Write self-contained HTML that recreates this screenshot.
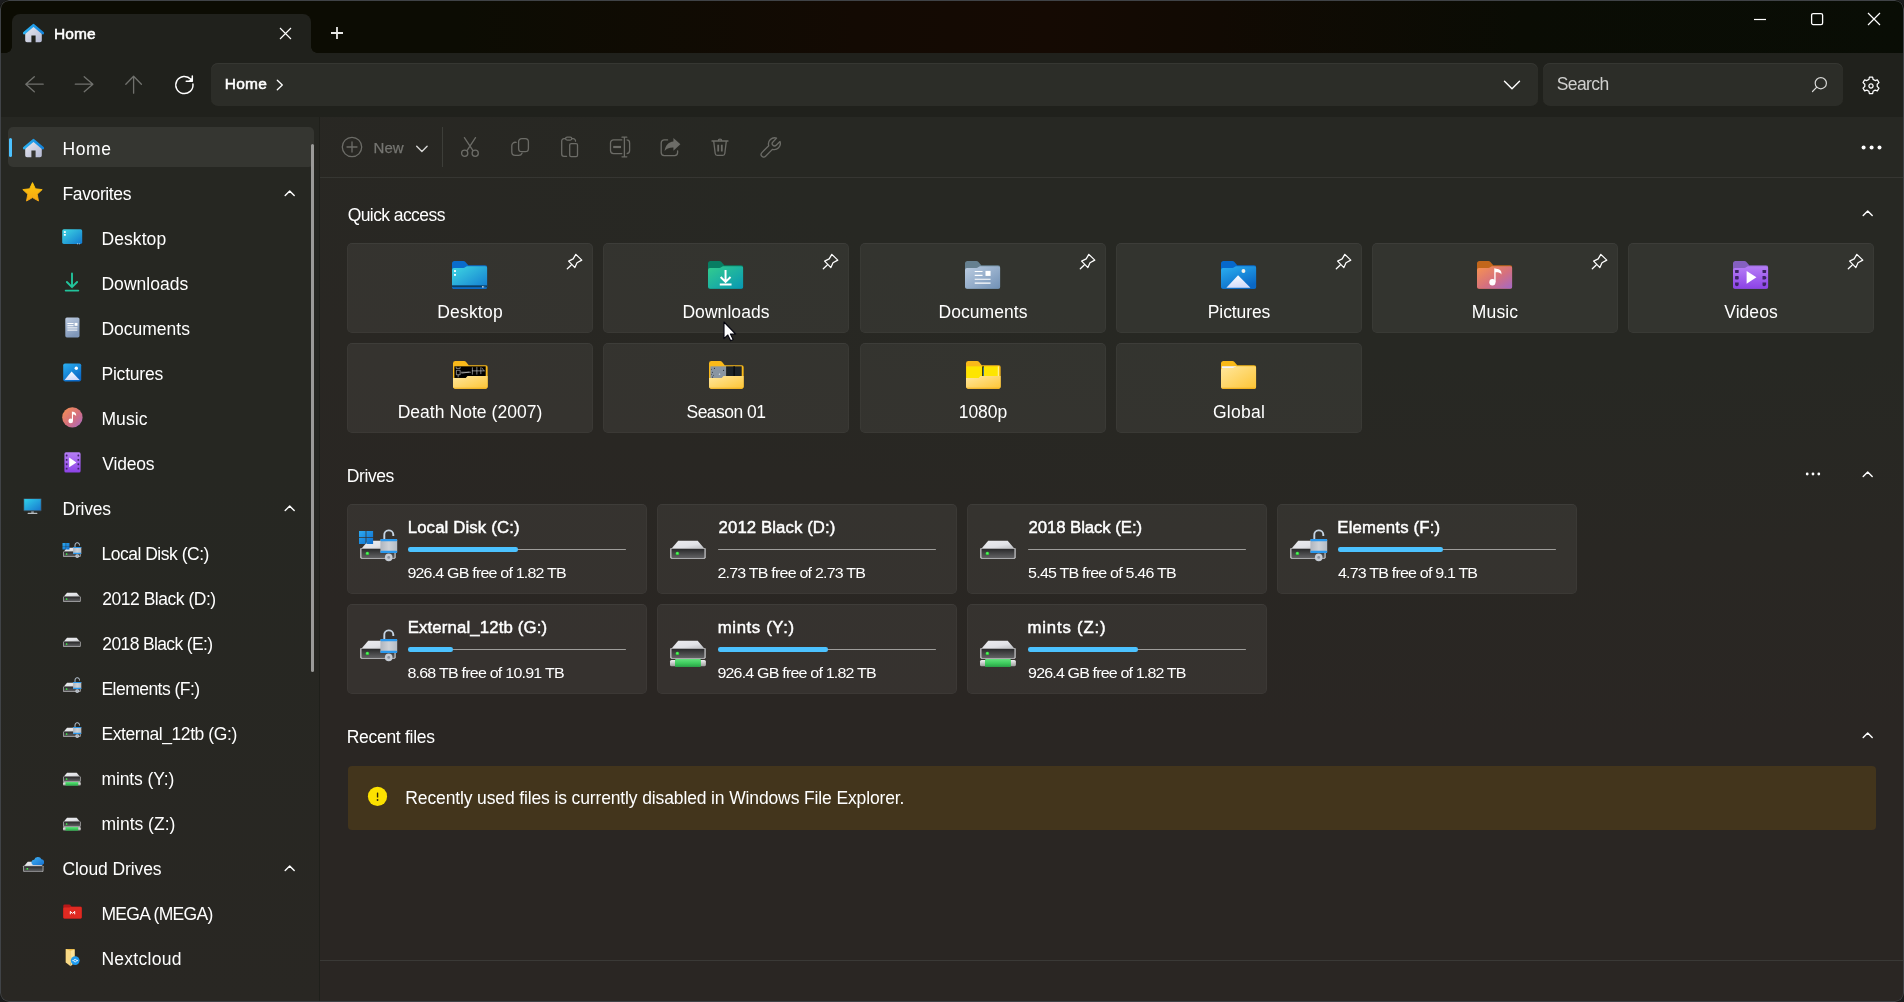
<!DOCTYPE html>
<html lang="en">
<head>
<meta charset="utf-8">
<title>Home - Files</title>
<style>
*{box-sizing:border-box;margin:0;padding:0}
html,body{width:1904px;height:1002px;overflow:hidden;background:#1b1c1d}
body{font-family:"Liberation Sans",sans-serif;color:#fff;position:relative}
#root{position:absolute;left:0;top:0;width:1904px;height:1002px;will-change:transform;border-radius:9px;overflow:hidden;background:#0b0c03}
#frame{position:absolute;left:0;top:0;width:1904px;height:1002px;border:1px solid #404347;border-radius:9px;pointer-events:none}
.abs,svg{position:absolute}
#titlebar{position:absolute;left:0;top:0;width:1904px;height:53px;background:linear-gradient(90deg,#0c0c03 0,#0c0c03 24%,#130a03 45%,#150a03 55%,#110a03 64%,#0a0c04 80%,#090d05 100%)}
#tab{position:absolute;left:12px;top:14px;width:299px;height:39px;background:#20211c;border-radius:8px 8px 0 0}
#tab:before,#tab:after{content:"";position:absolute;bottom:0;width:6px;height:6px}
#tab:before{left:-6px;background:radial-gradient(circle at 0 0,transparent 5.5px,#20211c 6px)}
#tab:after{right:-6px;background:radial-gradient(circle at 100% 0,transparent 5.5px,#20211c 6px)}
#navbar{position:absolute;left:0;top:53px;width:1904px;height:64px;background:#20211c}
.box{position:absolute;top:10px;height:43px;background:#2c2d28;border-radius:7px;box-shadow:inset 0 1px 0 #363732}
#sidebar{position:absolute;left:0;top:117px;width:319px;height:885px;background:linear-gradient(180deg,#262722 0,#262722 40%,#292723 100%)}
#divider{position:absolute;left:319px;top:117px;width:1px;height:885px;background:#1f201b}
#main{position:absolute;left:320px;top:117px;width:1584px;height:885px;background:radial-gradient(ellipse 130% 70% at 80% 0%,#272823 0,#272823 40%,#292723 70%,#2a2623 100%)}
.t{position:absolute;white-space:nowrap;line-height:1}
.sb{font-size:17.5px;color:#fff}
.card{position:absolute;background:rgba(255,255,255,.058);border-radius:5px;box-shadow:inset 0 0 0 1px rgba(255,255,255,.03),inset 0 1px 0 rgba(255,255,255,.02)}
.qa{width:246px;height:90px}
.qa .t{left:0;width:246px;text-align:center;font-size:17.5px}
.dr{width:300px;height:90px}
.dr .n{font-size:16.8px;-webkit-text-stroke:.45px #fff}
.semi{-webkit-text-stroke:.5px #fff}
.dr .s{font-size:16px;transform:scaleY(.9);transform-origin:0 0}
.dr .bar{position:absolute;left:61.2px;top:45px;width:217.6px;height:1.2px;background:#9e9d9b;border-radius:1px}
.dr .fill{position:absolute;left:61px;top:43.2px;height:4.4px;background:#4cc2ff;border-radius:2.2px}
.sec{font-size:17.5px;color:#fff}
</style>
</head>
<body>
<div id="root">
<div id="titlebar"></div>
<div id="tab"></div>
<div id="navbar">
  <div class="box" style="left:211px;width:1327px"></div>
  <div class="box" style="left:1543px;width:300px"></div>
</div>
<div id="sidebar"></div>
<div id="divider"></div>
<div id="main"></div>
<svg width="0" height="0" style="position:absolute">
<defs>
<linearGradient id="hg" x1="0" y1="0" x2="1" y2="1"><stop offset="0" stop-color="#e9eaf0"/><stop offset="1" stop-color="#b4b9d3"/></linearGradient>
<linearGradient id="hr" x1="0" y1="0" x2="1" y2="0"><stop offset="0" stop-color="#2cb2f3"/><stop offset="1" stop-color="#1384dc"/></linearGradient>
<linearGradient id="gStar" x1="0" y1="0" x2="0" y2="1"><stop offset="0" stop-color="#fdc70c"/><stop offset="1" stop-color="#f5a613"/></linearGradient>
<linearGradient id="gDesk" x1="0" y1="0" x2="1" y2="1"><stop offset="0" stop-color="#3fd8e2"/><stop offset="1" stop-color="#1279d0"/></linearGradient>
<linearGradient id="gDown" x1="0" y1="0" x2="1" y2="1"><stop offset="0" stop-color="#33cd8d"/><stop offset="1" stop-color="#0797b4"/></linearGradient>
<linearGradient id="gDoc" x1="0" y1="0" x2="1" y2="1"><stop offset="0" stop-color="#bccde1"/><stop offset="1" stop-color="#7090b5"/></linearGradient>
<linearGradient id="gPic" x1="0" y1="0" x2="0.6" y2="1"><stop offset="0" stop-color="#2bb0f1"/><stop offset="1" stop-color="#0a68c6"/></linearGradient>
<linearGradient id="gMnt" x1="0" y1="0" x2="0.3" y2="1"><stop offset="0" stop-color="#ffffff"/><stop offset="1" stop-color="#d3ddfb"/></linearGradient>
<linearGradient id="gMus" x1="0" y1="0" x2="1" y2="1"><stop offset="0" stop-color="#f8934f"/><stop offset="0.55" stop-color="#d5707e"/><stop offset="1" stop-color="#a268c8"/></linearGradient>
<linearGradient id="gVid" x1="0" y1="0" x2="0" y2="1"><stop offset="0" stop-color="#b67ef6"/><stop offset="1" stop-color="#8c42e6"/></linearGradient>
<linearGradient id="gFol" x1="0" y1="0" x2="1" y2="1"><stop offset="0" stop-color="#ffe79d"/><stop offset="1" stop-color="#fdc535"/></linearGradient>
<linearGradient id="gMon" x1="0" y1="0" x2="1" y2="1"><stop offset="0" stop-color="#2fd0ea"/><stop offset="1" stop-color="#1878cf"/></linearGradient>
<linearGradient id="gTop" x1="0" y1="0" x2="1" y2="1"><stop offset="0" stop-color="#ececef"/><stop offset="0.6" stop-color="#e2e3e7"/><stop offset="1" stop-color="#bfc0c4"/></linearGradient>
<linearGradient id="gFront" x1="0" y1="0" x2="0" y2="1"><stop offset="0" stop-color="#2a2a2b"/><stop offset="1" stop-color="#626264"/></linearGradient>
<linearGradient id="gGreen" x1="0" y1="0" x2="0" y2="1"><stop offset="0" stop-color="#62e07c"/><stop offset="0.5" stop-color="#3fcd5e"/><stop offset="1" stop-color="#2a9f47"/></linearGradient>
<linearGradient id="gPipe" x1="0" y1="0" x2="0" y2="1"><stop offset="0" stop-color="#f2f2f2"/><stop offset="1" stop-color="#9d9d9d"/></linearGradient>
<linearGradient id="gWin" x1="0" y1="0" x2="1" y2="1"><stop offset="0" stop-color="#2cabf2"/><stop offset="1" stop-color="#0d6bcb"/></linearGradient>
<linearGradient id="gLock" x1="0" y1="0" x2="1" y2="0"><stop offset="0" stop-color="#aeb5be"/><stop offset="0.5" stop-color="#ccd1d7"/><stop offset="1" stop-color="#b4bbc4"/></linearGradient>
<linearGradient id="gCloud" x1="0" y1="0" x2="1" y2="1"><stop offset="0" stop-color="#41b4f5"/><stop offset="1" stop-color="#1670d0"/></linearGradient>

<symbol id="iHome" viewBox="0 0 21 20"><path d="M2.2 9.2 L10.5 2.4 L18.8 9.2 V17.4 a1.8 1.8 0 0 1 -1.8 1.8 H12.6 V12.6 H8.4 V19.2 H4 a1.8 1.8 0 0 1 -1.8 -1.8Z" fill="url(#hg)"/><path d="M1.3 10.1 L10.5 2.2 L19.7 10.1" fill="none" stroke="url(#hr)" stroke-width="2.6" stroke-linecap="round" stroke-linejoin="round"/></symbol>

<symbol id="iStar" viewBox="0 0 21 20"><path d="M10.5 0.6 L13.4 6.8 L20.2 7.6 L15.2 12.2 L16.5 19 L10.5 15.6 L4.5 19 L5.8 12.2 L0.8 7.6 L7.6 6.8Z" fill="url(#gStar)" stroke="url(#gStar)" stroke-width="0.9" stroke-linejoin="round"/></symbol>

<!-- base folder pieces 36x29 -->
<symbol id="fBack" viewBox="0 0 36 29"><path d="M0 2.6 a2.6 2.6 0 0 1 2.6 -2.6 H11.6 a2.6 2.6 0 0 1 1.9 .8 L16.6 4.3 H33.6 a2.4 2.4 0 0 1 2.4 2.4 V26.3 a2.4 2.4 0 0 1 -2.4 2.4 H2.4 a2.4 2.4 0 0 1 -2.4 -2.4Z"/></symbol>
<symbol id="fFront" viewBox="0 0 36 29"><path d="M0 9.2 a2 2 0 0 1 2 -2 H11.6 a2.6 2.6 0 0 0 1.8 -.7 L15.2 5.4 H33.8 a2.2 2.2 0 0 1 2.2 2.2 V26.5 a2.2 2.2 0 0 1 -2.2 2.2 H2.2 a2.2 2.2 0 0 1 -2.2 -2.2Z"/></symbol>

<symbol id="iFDesk" viewBox="0 0 36 29"><use href="#fBack" fill="#0a6ccb"/><use href="#fFront" fill="url(#gDesk)"/><path d="M0 25.2 H36 V26.6 a2.2 2.2 0 0 1 -2.2 2.2 H2.2 a2.2 2.2 0 0 1 -2.2 -2.2Z" fill="#0e6ac4"/><rect x="0" y="25.2" width="36" height="1.8" fill="#0b3f63"/><rect x="2.1" y="9.4" width="1.9" height="1.9" fill="#fff"/><rect x="2.1" y="13.4" width="1.9" height="1.9" fill="#fff"/><rect x="30.8" y="26" width="1.4" height="1.4" fill="#fff"/><rect x="33" y="26.2" width="1" height="1" fill="#4a86b8"/></symbol>

<symbol id="iFDown" viewBox="0 0 36 29"><use href="#fBack" fill="#077d62"/><use href="#fFront" fill="url(#gDown)"/><path d="M17.9 9.3 V21.4 M12.9 16.5 L17.9 21.6 L23 16.5 M12 24.3 H24" stroke="#fff" stroke-width="2" fill="none" stroke-linejoin="miter"/></symbol>

<symbol id="iFDoc" viewBox="0 0 36 29"><use href="#fBack" fill="#668090"/><use href="#fFront" fill="url(#gDoc)"/><path d="M9.9 10.8 H17.9 M9.9 14.8 H17.9 M9.9 18.8 H26.1 M9.9 22.8 H26.1" stroke="#fff" stroke-width="1.15"/><rect x="20.9" y="10.2" width="5.2" height="5.2" fill="#fff"/></symbol>

<symbol id="iFPic" viewBox="0 0 36 29"><use href="#fBack" fill="#0668cb"/><use href="#fFront" fill="url(#gPic)"/><path d="M17.4 14.6 L30 27.6 H5.5Z" fill="url(#gMnt)"/><circle cx="22.9" cy="10.3" r="2" fill="#f4f2ea"/></symbol>

<symbol id="iFMus" viewBox="0 0 36 29"><use href="#fBack" fill="#c2661b"/><use href="#fFront" fill="url(#gMus)"/><ellipse cx="15.7" cy="22" rx="3.1" ry="3.3" fill="#fff"/><path d="M17.6 22 V7.6 C20 8.2 24.6 8.6 24.9 12 V14 C23.5 11.8 21.5 11.6 19 11.7 V22Z" fill="#fff"/></symbol>

<symbol id="iFVid" viewBox="0 0 36 29"><use href="#fBack" fill="#8560c0"/><use href="#fFront" fill="url(#gVid)"/><path d="M13.9 10.2 L23.9 16.8 L13.9 23.5Z" fill="#fff"/><g fill="#3c2365"><rect x="2.1" y="9.3" width="3.7" height="3" rx=".5"/><rect x="2.1" y="15.5" width="3.7" height="3.5" rx=".8"/><path d="M2.1 22.3 H5.8 V24.3 a1.8 1.8 0 0 1 -3.7 0Z"/><rect x="30.1" y="9.3" width="3.7" height="3" rx=".5"/><path d="M30.1 15.5 H32.3 a1.7 1.7 0 0 1 0 3.5 H30.1Z"/><path d="M30.1 22.3 H33.8 V24 a2 2 0 0 1 -3.7 1Z"/></g></symbol>

<!-- yellow folder, 35x29 -->
<symbol id="yBack" viewBox="0 0 35 29"><path d="M0 2.4 a2.4 2.4 0 0 1 2.4 -2.4 H11.2 a2.4 2.4 0 0 1 1.8 .8 L15.8 4.3 H32.8 a2.2 2.2 0 0 1 2.2 2.2 V26.4 a2.2 2.2 0 0 1 -2.2 2.2 H2.2 a2.2 2.2 0 0 1 -2.2 -2.2Z" fill="#f9b91a"/></symbol>
<symbol id="yFront" viewBox="0 0 35 29"><path d="M0 17.5 H12.8 L14.6 15.6 H35 V26.4 a2.2 2.2 0 0 1 -2.2 2.2 H2.2 a2.2 2.2 0 0 1 -2.2 -2.2Z" fill="url(#gFol)"/><path d="M0.6 27.6 a2.2 2.2 0 0 0 1.6 .9 H32.8 a2.2 2.2 0 0 0 1.6 -.9Z" fill="#f2ad16"/></symbol>

<symbol id="iFGlobal" viewBox="0 0 36 29"><use href="#fBack" fill="#f9b917"/><rect x="0.8" y="5.4" width="14.5" height="2" fill="#f1f3fb"/><use href="#fFront" fill="url(#gFol)"/><path d="M0.6 27.7 a2.2 2.2 0 0 0 1.6 .9 H33.8 a2.2 2.2 0 0 0 1.6 -.9Z" fill="#f2ad16"/></symbol>

<!-- drives 40x40 -->
<symbol id="dBase" viewBox="0 0 40 40"><path d="M10.2 11.7 H29.7 L36.1 19.2 H3.8Z" fill="url(#gTop)"/><path d="M2 20 a1 1 0 0 1 1 -1 H36.9 a1 1 0 0 1 1 1 V28.2 L36.8 30.1 H3.1 L2 28.2Z" fill="#a9a9ab"/><path d="M3.6 19.9 H36.3 V28 L35.6 29 H4.3 L3.6 28Z" fill="url(#gFront)"/><circle cx="9.4" cy="24.4" r="1.7" fill="#2ee33a"/><circle cx="9.1" cy="24.1" r=".7" fill="#8dff8f"/></symbol>
<symbol id="dLock" viewBox="0 0 40 40"><path d="M26.3 10 V6.2 a4.5 4.5 0 0 1 9 -.6 V7" stroke="#c5d3e2" stroke-width="1.9" fill="none" stroke-linecap="butt"/><circle cx="30.7" cy="28.4" r="3.8" fill="#c6ccd4"/><circle cx="30.7" cy="28.4" r="1.4" fill="#8d949e"/><rect x="22.4" y="9.9" width="16.8" height="14.2" rx="1" fill="url(#gLock)"/><rect x="22.4" y="9.9" width="16.8" height="2.3" rx="1" fill="#2998ee"/><rect x="22.4" y="21.8" width="16.8" height="2.3" rx="1" fill="#2998ee"/></symbol>
<symbol id="dWin" viewBox="0 0 40 40"><path d="M1 1.9 H7.6 V8 H1Z M8.4 1.9 H15.1 V8 H8.4Z M1 8.8 H7.6 V15 H1Z M8.4 8.8 H15.1 V15 H8.4Z" fill="url(#gWin)"/></symbol>
<symbol id="dNet" viewBox="0 0 40 40"><rect x="2" y="30.9" width="35.9" height="6.4" rx="1.6" fill="url(#gPipe)"/><rect x="7" y="30.1" width="25.9" height="7.9" rx="1" fill="url(#gGreen)"/></symbol>
<symbol id="dCloud" viewBox="0 0 40 40"><path d="M20 17.5 a4.6 4.6 0 0 1 1.5 -9 a6.8 6.8 0 0 1 12.8 -1 a5.1 5.1 0 0 1 1.2 10Z" fill="url(#gCloud)"/></symbol>
</defs>
</svg>
<!--TITLE-->
<svg class="abs" style="left:23px;top:23px" width="21" height="20"><use href="#iHome" width="21" height="20"/></svg>
<div class="t semi" id="t1" style="left:54.12px;top:25.6px;letter-spacing:0.060px;font-size:15.5px">Home</div>
<svg class="abs" style="left:279px;top:27px" width="13" height="13" viewBox="0 0 13 13"><path d="M1 1 L12 12 M12 1 L1 12" stroke="#fff" stroke-width="1.15" fill="none"/></svg>
<svg class="abs" style="left:330px;top:26px" width="14" height="14" viewBox="0 0 14 14"><path d="M7 1 V13 M1 7 H13" stroke="#e8e8e6" stroke-width="1.8" fill="none"/></svg>
<svg class="abs" style="left:1753px;top:12px" width="14" height="14" viewBox="0 0 14 14"><path d="M1 7.5 H13" stroke="#fff" stroke-width="1.2" fill="none"/></svg>
<svg class="abs" style="left:1810px;top:12px" width="14" height="14" viewBox="0 0 14 14"><rect x="1.6" y="1.6" width="11" height="11" rx="1.6" stroke="#fff" stroke-width="1.3" fill="none"/></svg>
<svg class="abs" style="left:1867px;top:12px" width="14" height="14" viewBox="0 0 14 14"><path d="M1 1 L13 13 M13 1 L1 13" stroke="#fff" stroke-width="1.2" fill="none"/></svg>
<!--NAV-->
<svg class="abs" style="left:23px;top:73.4px" width="22" height="22" viewBox="0 0 22 22"><path d="M20.2 11.2 H2.9 M11.3 3.7 L2.8 11.2 L11.3 18.7" stroke="#70716d" stroke-width="1.3" fill="none" stroke-linecap="round" stroke-linejoin="round"/></svg>
<svg class="abs" style="left:73px;top:73.4px" width="22" height="22" viewBox="0 0 22 22"><path d="M2.3 11.2 H19.8 M11.2 3.7 L19.9 11.2 L11.2 18.7" stroke="#70716d" stroke-width="1.3" fill="none" stroke-linecap="round" stroke-linejoin="round"/></svg>
<svg class="abs" style="left:123px;top:73.4px" width="22" height="22" viewBox="0 0 22 22"><path d="M10.6 20.2 V3.4 M2.8 11.2 L10.6 3.2 L18.4 11.2" stroke="#70716d" stroke-width="1.3" fill="none" stroke-linecap="round" stroke-linejoin="round"/></svg>
<svg class="abs" style="left:173px;top:74px" width="22" height="22" viewBox="0 0 22 22"><path d="M19.95 10.1 A8.6 8.6 0 1 1 17.8 5.25" stroke="#fff" stroke-width="1.5" fill="none" stroke-linecap="round"/><path d="M19.3 2 V7.2 H13.2" stroke="#fff" stroke-width="1.5" fill="none" stroke-linecap="round" stroke-linejoin="round"/><path d="M19.3 3.5 V7.2 H15.5Z" fill="#fff"/></svg>
<div class="t semi" id="t2" style="left:224.72px;top:76.4px;letter-spacing:0.240px;font-size:15.5px">Home</div>
<svg class="abs" style="left:275px;top:79px" width="10" height="12" viewBox="0 0 10 12"><path d="M2.3 1.3 L7.3 6 L2.3 10.7" stroke="#fff" stroke-width="1.3" fill="none" stroke-linecap="round" stroke-linejoin="round"/></svg>
<svg class="abs" style="left:1502px;top:78px" width="20" height="14" viewBox="0 0 20 14"><path d="M2.5 3.2 L10 10.8 L17.5 3.2" stroke="#fff" stroke-width="1.4" fill="none" stroke-linecap="round" stroke-linejoin="round"/></svg>
<div class="t " id="t3" style="left:1556.76px;top:76px;letter-spacing:-0.612px;font-size:17.5px;color:#d0d0ce">Search</div>
<svg class="abs" style="left:1810px;top:76px" width="18" height="18" viewBox="0 0 18 18"><circle cx="10.8" cy="7.2" r="5.6" stroke="#d8d8d6" stroke-width="1.2" fill="none"/><path d="M6.8 11.2 L2.5 15.5" stroke="#d8d8d6" stroke-width="1.2" fill="none" stroke-linecap="round"/></svg>
<svg class="abs" style="left:1861px;top:75.8px" width="20" height="20" viewBox="0 0 20 20"><g transform="translate(10 10)" fill="none" stroke="#fff" stroke-width="1.25" stroke-linejoin="round"><circle r="2.1"/><path d="M-1.6 -8.9 h3.2 l0.5 2.3 l2 1.15 l2.25 -0.75 l1.6 2.8 l-1.75 1.6 v2.3 l1.75 1.6 l-1.6 2.8 l-2.25 -0.75 l-2 1.15 l-0.5 2.3 h-3.2 l-0.5 -2.3 l-2 -1.15 l-2.25 0.75 l-1.6 -2.8 l1.75 -1.6 v-2.3 l-1.75 -1.6 l1.6 -2.8 l2.25 0.75 l2 -1.15z"/></g></svg>
<!--SIDEBAR-->
<div class="abs" style="left:8px;top:127px;width:306px;height:40px;background:#353631;border-radius:5px"></div>
<div class="abs" style="left:8.5px;top:138px;width:3.5px;height:19px;background:#4cc2ff;border-radius:2px"></div>
<div class="abs" style="left:311px;top:144px;width:3px;height:528px;background:#9a9a98;border-radius:2px"></div>
<svg style="left:23px;top:137.5px" width="21" height="20"><use href="#iHome" width="21" height="20"/></svg>
<div class="t sb" id="t4" style="left:62.52px;top:140.5px;letter-spacing:0.600px;">Home</div>
<svg style="left:22.1px;top:182.3px" width="21" height="20"><use href="#iStar" width="21" height="20"/></svg>
<div class="t sb" id="t5" style="left:62.52px;top:185.5px;letter-spacing:-0.382px;">Favorites</div>
<svg style="left:283.2px;top:188.5px" width="12" height="8" viewBox="0 0 12 8"><path d="M2.2 6.6 L6.7 2 L11.2 6.6" stroke="#fff" stroke-width="1.4" fill="none" stroke-linecap="round" stroke-linejoin="round"/></svg>
<svg style="left:61.6px;top:228.6px" width="21" height="16" viewBox="0 0 21 16"><rect x=".2" y=".3" width="20" height="14.6" rx="1.6" fill="url(#gDesk)"/><rect x="1.9" y="2.2" width="1.9" height="1.7" fill="#fff"/><rect x="1.9" y="5" width="1.9" height="1.7" fill="#fff"/><rect x="15.2" y="14.4" width=".9" height=".9" fill="#e6f2fc"/><rect x="17" y="14.4" width=".9" height=".9" fill="#a9cdee"/></svg>
<div class="t sb" id="t6" style="left:101.44px;top:230.5px;letter-spacing:0.090px;">Desktop</div>
<svg style="left:64px;top:271px" width="16" height="22" viewBox="0 0 16 22"><path d="M8 2.4 V16 M2.9 11 L8 16.2 L13.1 11 M1.7 19.6 H14.3" stroke="#22c49c" stroke-width="1.9" fill="none" stroke-linecap="round" stroke-linejoin="round"/></svg>
<div class="t sb" id="t7" style="left:101.44px;top:275.5px;letter-spacing:0.045px;">Downloads</div>
<svg style="left:64.5px;top:316.5px" width="15" height="21" viewBox="0 0 15 21"><defs><linearGradient id="gPg" x1="0" y1="0" x2=".4" y2="1"><stop offset="0" stop-color="#bfcde2"/><stop offset="1" stop-color="#7f97b9"/></linearGradient></defs><rect x=".3" y=".4" width="14.2" height="20" rx="1.6" fill="url(#gPg)"/><path d="M2.4 6.5 H8.6 M2.4 8.7 H8.6 M2.4 10.9 H12.4 M2.4 13.1 H12.4" stroke="#fff" stroke-width="1"/><rect x="9.6" y="5.9" width="2.9" height="2.9" fill="#fff"/></svg>
<div class="t sb" id="t8" style="left:101.44px;top:320.5px;letter-spacing:0.000px;">Documents</div>
<svg style="left:63px;top:362.5px" width="19" height="19" viewBox="0 0 19 19"><rect x=".2" y=".4" width="18" height="18" rx="1.8" fill="url(#gPic)"/><path d="M8.6 8.6 L16.6 17 H1.6Z" fill="url(#gMnt)"/><circle cx="13.3" cy="5.2" r="1.7" fill="#fff"/></svg>
<div class="t sb" id="t9" style="left:101.44px;top:365.5px;letter-spacing:-0.206px;">Pictures</div>
<svg style="left:61.5px;top:406.5px" width="21" height="21" viewBox="0 0 21 21"><circle cx="10.4" cy="10.4" r="10.2" fill="url(#gMus)"/><ellipse cx="8.7" cy="13.9" rx="2.3" ry="2.4" fill="#fff"/><path d="M9.9 14 V4.6 C11.5 5 14 5.4 14.1 7.8 V9 C13.2 7.6 12 7.5 11 7.5 V14Z" fill="#fff"/></svg>
<div class="t sb" id="t10" style="left:101.44px;top:410.5px;letter-spacing:0.090px;">Music</div>
<svg style="left:63.5px;top:451.5px" width="17" height="21" viewBox="0 0 17 21"><rect x=".4" y=".3" width="16.2" height="20.3" rx="1.6" fill="url(#gVid)"/><path d="M5.2 5.6 L12.4 10.4 L5.2 15.2Z" fill="#fff"/><g fill="#3f2569"><rect x="1.8" y="2.6" width="1.7" height="1.9" rx=".4"/><rect x="1.8" y="6.9" width="1.7" height="1.9" rx=".4"/><rect x="1.8" y="11.3" width="1.7" height="1.9" rx=".4"/><rect x="1.8" y="15.7" width="1.7" height="1.9" rx=".4"/><rect x="13.5" y="2.6" width="1.7" height="1.9" rx=".4"/><rect x="13.5" y="6.9" width="1.7" height="1.9" rx=".4"/><rect x="13.5" y="11.3" width="1.7" height="1.9" rx=".4"/><rect x="13.5" y="15.7" width="1.7" height="1.9" rx=".4"/></g></svg>
<div class="t sb" id="t11" style="left:102.34px;top:455.5px;letter-spacing:-0.216px;">Videos</div>
<svg style="left:23.1px;top:497.9px" width="19" height="17.5" viewBox="0 0 19 17" preserveAspectRatio="none"><rect x=".4" y=".3" width="18.2" height="12.6" rx="1" fill="#3a4a55"/><rect x="1.2" y="1" width="16.6" height="11" fill="url(#gMon)"/><rect x="8.2" y="12.9" width="2.6" height="1.8" fill="#8a8f94"/><rect x="4.6" y="14.4" width="9.8" height="1.2" rx=".5" fill="#b9bec3"/></svg>
<div class="t sb" id="t12" style="left:62.52px;top:500.5px;letter-spacing:-0.216px;">Drives</div>
<svg style="left:283.2px;top:503.5px" width="12" height="8" viewBox="0 0 12 8"><path d="M2.2 6.6 L6.7 2 L11.2 6.6" stroke="#fff" stroke-width="1.4" fill="none" stroke-linecap="round" stroke-linejoin="round"/></svg>
<svg style="left:61.8px;top:542px" width="19.8" height="19.8" viewBox="0 0 40 40"><use href="#dBase"/><use href="#dWin"/><use href="#dLock"/></svg>
<div class="t sb" id="t13" style="left:101.44px;top:545.5px;letter-spacing:-0.489px;">Local Disk (C:)</div>
<svg style="left:61.8px;top:587px" width="19.8" height="19.8" viewBox="0 0 40 40"><use href="#dBase"/></svg>
<div class="t sb" id="t14" style="left:102.34px;top:590.5px;letter-spacing:-0.489px;">2012 Black (D:)</div>
<svg style="left:61.8px;top:632px" width="19.8" height="19.8" viewBox="0 0 40 40"><use href="#dBase"/></svg>
<div class="t sb" id="t15" style="left:102.34px;top:635.5px;letter-spacing:-0.630px;">2018 Black (E:)</div>
<svg style="left:61.8px;top:677px" width="19.8" height="19.8" viewBox="0 0 40 40"><use href="#dBase"/><use href="#dLock"/></svg>
<div class="t sb" id="t16" style="left:101.44px;top:680.5px;letter-spacing:-0.525px;">Elements (F:)</div>
<svg style="left:61.8px;top:722px" width="19.8" height="19.8" viewBox="0 0 40 40"><use href="#dBase"/><use href="#dLock"/></svg>
<div class="t sb" id="t17" style="left:101.44px;top:725.5px;letter-spacing:-0.424px;">External_12tb (G:)</div>
<svg style="left:61.8px;top:767px" width="19.8" height="19.8" viewBox="0 0 40 40"><use href="#dNet"/><use href="#dBase"/></svg>
<div class="t sb" id="t18" style="left:101.44px;top:770.5px;letter-spacing:-0.100px;">mints (Y:)</div>
<svg style="left:61.8px;top:812px" width="19.8" height="19.8" viewBox="0 0 40 40"><use href="#dNet"/><use href="#dBase"/></svg>
<div class="t sb" id="t19" style="left:101.44px;top:815.5px;letter-spacing:-0.000px;">mints (Z:)</div>
<svg style="left:21.6px;top:855.2px" width="22.7" height="22.7" viewBox="0 0 40 40"><use href="#dBase"/><use href="#dCloud"/></svg>
<div class="t sb" id="t20" style="left:62.52px;top:860.5px;letter-spacing:-0.098px;">Cloud Drives</div>
<svg style="left:283.2px;top:863.5px" width="12" height="8" viewBox="0 0 12 8"><path d="M2.2 6.6 L6.7 2 L11.2 6.6" stroke="#fff" stroke-width="1.4" fill="none" stroke-linecap="round" stroke-linejoin="round"/></svg>
<svg style="left:62.5px;top:904px" width="19" height="15" viewBox="0 0 19 15"><path d="M.3 1.8 a1.4 1.4 0 0 1 1.4 -1.4 H6 a1.4 1.4 0 0 1 1 .4 L8.6 2.4 H17.4 a1.3 1.3 0 0 1 1.3 1.3 V13.3 a1.3 1.3 0 0 1 -1.3 1.3 H1.6 a1.3 1.3 0 0 1 -1.3 -1.3Z" fill="#b81818"/><path d="M.3 4.6 a1 1 0 0 1 1 -1 H6.2 L7.6 2.9 H17.6 a1.1 1.1 0 0 1 1.1 1.1 V13.3 a1.3 1.3 0 0 1 -1.3 1.3 H1.6 a1.3 1.3 0 0 1 -1.3 -1.3Z" fill="#e02a22"/><path d="M7.3 10.3 V7.4 L9.5 9.4 L11.7 7.4 V10.3" stroke="#fff" stroke-width="1" fill="none"/></svg>
<div class="t sb" id="t21" style="left:101.44px;top:905.5px;letter-spacing:-0.666px;">MEGA (MEGA)</div>
<svg style="left:64.5px;top:948px" width="16" height="19" viewBox="0 0 16 19"><path d="M.8 1 H9.6 V14.6 H.8Z" fill="#e9b949"/><path d="M.8 1 L5.6 2.8 V18.2 L.8 14.6Z" fill="#f8d986"/><path d="M5.6 2.8 L9.6 1.4 V14.6 L5.6 18.2Z" fill="#fbe29a"/><circle cx="10.2" cy="12.6" r="4.4" fill="#1e9bf0"/><circle cx="10.2" cy="12.6" r="1.3" fill="none" stroke="#fff" stroke-width=".8"/><path d="M7.4 12.6 h1.2 M11.8 12.6 h1.2" stroke="#fff" stroke-width=".9"/></svg>
<div class="t sb" id="t22" style="left:101.44px;top:950.5px;letter-spacing:0.270px;">Nextcloud</div>
<!--TOOLBAR-->
<svg style="left:341px;top:136px" width="22" height="22" viewBox="0 0 22 22"><circle cx="11" cy="11" r="9.7" stroke="#6c6c67" stroke-width="1.3" fill="none"/><path d="M11 6 V16 M6 11 H16" stroke="#6c6c67" stroke-width="1.3" stroke-linecap="round"/></svg>
<div class="t " id="t23" style="left:373.52px;top:139.5px;letter-spacing:0.090px;font-size:15px;color:#757571;-webkit-text-stroke:.25px #757571">New</div>
<svg style="left:414px;top:143px" width="16" height="12" viewBox="0 0 16 12"><path d="M2.7 3.3 L7.9 8.6 L13.1 3.3" stroke="#d6d6d4" stroke-width="1.4" fill="none" stroke-linecap="round" stroke-linejoin="round"/></svg>
<div class="abs" style="left:442px;top:127px;width:1px;height:40px;background:#3d3e39"></div>
<svg style="left:460px;top:136px" width="20" height="22" viewBox="0 0 20 22" fill="none" stroke="#6c6c67" stroke-width="1.3" stroke-linecap="round"><path d="M4.4 1.6 L13 14.6 M15.5 1.6 L7 14.6"/><circle cx="4.7" cy="17.3" r="3.1"/><circle cx="15.2" cy="17.3" r="3.1"/></svg>
<svg style="left:510px;top:137px" width="20" height="20" viewBox="0 0 20 20" fill="none" stroke="#6c6c67" stroke-width="1.3" stroke-linecap="round"><rect x="8.6" y="1.6" width="9.8" height="13" rx="3.2"/><path d="M6.2 5.4 a3.4 3.4 0 0 0 -4.4 3.3 V15 a3.4 3.4 0 0 0 3.4 3.4 H8.8 a3.4 3.4 0 0 0 3.2 -2.2"/></svg>
<svg style="left:560px;top:136px" width="20" height="22" viewBox="0 0 20 22" fill="none" stroke="#6c6c67" stroke-width="1.3" stroke-linecap="round"><path d="M5.4 2.7 H4 a2.3 2.3 0 0 0 -2.3 2.3 V18 a2.3 2.3 0 0 0 2.3 2.3 H6.6 M12 2.7 H13.2 a2.3 2.3 0 0 1 2.3 2.3 V5.2"/><rect x="5.6" y="1.1" width="6.2" height="3" rx="1.5"/><rect x="9.7" y="7.7" width="7.8" height="12.9" rx="1.4"/></svg>
<svg style="left:609px;top:136px" width="22" height="22" viewBox="0 0 22 22" fill="none" stroke="#6c6c67" stroke-width="1.3" stroke-linecap="round"><path d="M12.8 3.9 H4.5 a3 3 0 0 0 -3 3 V14.6 a3 3 0 0 0 3 3 H12.8 M17.8 3.9 H17.6 a3 3 0 0 1 3 3 V14.6 a3 3 0 0 1 -3 3 H17.8 M15.4 1.3 V20.7 M13 1.2 H17.8 M13 20.8 H17.8"/><path d="M4.2 11 H12" stroke-width="2.2" stroke-linecap="butt"/></svg>
<svg style="left:660px;top:137px" width="22" height="20" viewBox="0 0 22 20"><path d="M7.6 2.9 H4.2 a3 3 0 0 0 -3 3 V15.6 a3 3 0 0 0 3 3 H14.6 a3 3 0 0 0 3 -3 V13.8" fill="none" stroke="#6c6c67" stroke-width="1.3" stroke-linecap="round"/><path d="M13.4 0.9 L20.4 7.3 L13.4 13.8 V10.4 C9 10.3 6.4 11.6 4.6 14 C5.2 8.6 8.4 4.9 13.4 4.4Z" fill="#6c6c67"/></svg>
<svg style="left:711px;top:137px" width="18" height="20" viewBox="0 0 18 20" fill="none" stroke="#6c6c67" stroke-width="1.3" stroke-linecap="round"><path d="M1 4 H17 M7.3 3.8 a1.7 1.7 0 0 1 3.4 0 M2.7 4.2 L4.2 16.5 a2 2 0 0 0 2 1.8 H11.8 a2 2 0 0 0 2 -1.8 L15.3 4.2"/><path d="M7.2 7.8 V14.4 M10.8 7.8 V14.4" stroke-width="1.8" stroke-linecap="butt"/></svg>
<svg style="left:759px;top:136px" width="22" height="22" viewBox="0 0 22 22" fill="none" stroke="#6c6c67" stroke-width="1.3" stroke-linejoin="round"><path d="M17.6 2.1 a6.2 6.2 0 0 0 -7.9 7.6 L2.9 16.6 a2.6 2.6 0 0 0 3.7 3.7 L13.4 13.4 a6.2 6.2 0 0 0 7.6 -7.9 L17.2 9.3 a2.3 2.3 0 0 1 -3.3 -3.3Z"/></svg>
<svg style="left:1860px;top:144px" width="24" height="8" viewBox="0 0 24 8"><circle cx="3.6" cy="3.6" r="2" fill="#fff"/><circle cx="11.6" cy="3.6" r="2" fill="#fff"/><circle cx="19.5" cy="3.6" r="2" fill="#fff"/></svg>
<div class="abs" style="left:320px;top:177px;width:1584px;height:1px;background:#363632"></div>
<!--QUICK-->
<div class="t sec" id="t24" style="left:347.64px;top:206.7px;letter-spacing:-0.573px;">Quick access</div>
<svg style="left:1860.6px;top:208.8px" width="12" height="8" viewBox="0 0 12 8"><path d="M2.2 6.6 L6.7 2 L11.2 6.6" stroke="#fff" stroke-width="1.4" fill="none" stroke-linecap="round" stroke-linejoin="round"/></svg>
<div class="card qa" style="left:347px;top:243px"><svg style="left:105.3px;top:17.8px" width="35.3" height="28.1" viewBox="0 0 36 29" preserveAspectRatio="none"><use href="#iFDesk"/></svg><svg style="left:219px;top:10px" width="17" height="17" viewBox="0 0 17 17" fill="none" stroke="#fff" stroke-width="1.25" stroke-linejoin="round" stroke-linecap="round"><path d="M9.8 1.4 L15.8 7.1 L11 9.8 L8.9 14.6 L2.6 8.1 L7.2 5.9Z M5 12.2 L1.3 15.8"/></svg><div class="t " id="t25" style="top:61px;letter-spacing:0.210px;">Desktop</div></div>
<div class="card qa" style="left:603px;top:243px"><svg style="left:105.3px;top:17.8px" width="35.3" height="28.1" viewBox="0 0 36 29" preserveAspectRatio="none"><use href="#iFDown"/></svg><svg style="left:219px;top:10px" width="17" height="17" viewBox="0 0 17 17" fill="none" stroke="#fff" stroke-width="1.25" stroke-linejoin="round" stroke-linecap="round"><path d="M9.8 1.4 L15.8 7.1 L11 9.8 L8.9 14.6 L2.6 8.1 L7.2 5.9Z M5 12.2 L1.3 15.8"/></svg><div class="t " id="t26" style="top:61px;letter-spacing:0.068px;">Downloads</div></div>
<div class="card qa" style="left:860px;top:243px"><svg style="left:105.3px;top:17.8px" width="35.3" height="28.1" viewBox="0 0 36 29" preserveAspectRatio="none"><use href="#iFDoc"/></svg><svg style="left:219px;top:10px" width="17" height="17" viewBox="0 0 17 17" fill="none" stroke="#fff" stroke-width="1.25" stroke-linejoin="round" stroke-linecap="round"><path d="M9.8 1.4 L15.8 7.1 L11 9.8 L8.9 14.6 L2.6 8.1 L7.2 5.9Z M5 12.2 L1.3 15.8"/></svg><div class="t " id="t27" style="top:61px;letter-spacing:0.045px;">Documents</div></div>
<div class="card qa" style="left:1116px;top:243px"><svg style="left:105.3px;top:17.8px" width="35.3" height="28.1" viewBox="0 0 36 29" preserveAspectRatio="none"><use href="#iFPic"/></svg><svg style="left:219px;top:10px" width="17" height="17" viewBox="0 0 17 17" fill="none" stroke="#fff" stroke-width="1.25" stroke-linejoin="round" stroke-linecap="round"><path d="M9.8 1.4 L15.8 7.1 L11 9.8 L8.9 14.6 L2.6 8.1 L7.2 5.9Z M5 12.2 L1.3 15.8"/></svg><div class="t " id="t28" style="top:61px;letter-spacing:-0.103px;">Pictures</div></div>
<div class="card qa" style="left:1372px;top:243px"><svg style="left:105.3px;top:17.8px" width="35.3" height="28.1" viewBox="0 0 36 29" preserveAspectRatio="none"><use href="#iFMus"/></svg><svg style="left:219px;top:10px" width="17" height="17" viewBox="0 0 17 17" fill="none" stroke="#fff" stroke-width="1.25" stroke-linejoin="round" stroke-linecap="round"><path d="M9.8 1.4 L15.8 7.1 L11 9.8 L8.9 14.6 L2.6 8.1 L7.2 5.9Z M5 12.2 L1.3 15.8"/></svg><div class="t " id="t29" style="top:61px;letter-spacing:0.135px;">Music</div></div>
<div class="card qa" style="left:1628px;top:243px"><svg style="left:105.3px;top:17.8px" width="35.3" height="28.1" viewBox="0 0 36 29" preserveAspectRatio="none"><use href="#iFVid"/></svg><svg style="left:219px;top:10px" width="17" height="17" viewBox="0 0 17 17" fill="none" stroke="#fff" stroke-width="1.25" stroke-linejoin="round" stroke-linecap="round"><path d="M9.8 1.4 L15.8 7.1 L11 9.8 L8.9 14.6 L2.6 8.1 L7.2 5.9Z M5 12.2 L1.3 15.8"/></svg><div class="t " id="t30" style="top:61px;letter-spacing:0.036px;">Videos</div></div>
<div class="card qa" style="left:347px;top:343px"><svg style="left:105.9px;top:17.8px" width="34.8" height="28.1" viewBox="0 0 35 29" preserveAspectRatio="none"><use href="#yBack"/><rect x="1.4" y="5.5" width="31.5" height="12" fill="#000"/><path d="M3.2 6 v1.6 h4 v-1.6 M3.4 9.6 h3.8 v4.6 h-3.8z M5.2 14.2 v2.6 M8 11.6 h10 M8.5 12.6 l8 -1.2 M19.5 6.5 v7.5 M24 6 v8 M28 6.5 v7 M19 10.2 h13 M29 7 l2 3" stroke="#d8d8d8" stroke-width=".6" fill="none"/><use href="#yFront"/></svg><div class="t " id="t31" style="top:61px;letter-spacing:0.045px;">Death Note (2007)</div></div>
<div class="card qa" style="left:603px;top:343px"><svg style="left:105.9px;top:17.8px" width="34.8" height="28.1" viewBox="0 0 35 29" preserveAspectRatio="none"><use href="#yBack"/><rect x="1.4" y="5.5" width="16" height="12" fill="#8995a2"/><rect x="17.2" y="5.5" width="15.7" height="12" fill="#1b2228"/><rect x="24.5" y="5.5" width="1.6" height="12" fill="#0a0d10"/><g fill="#262c33"><circle cx="5.5" cy="7.6" r=".6"/><circle cx="2.6" cy="8.6" r=".5"/><circle cx="3.4" cy="11.6" r=".6"/><circle cx="2.6" cy="13.6" r=".5"/><circle cx="4.6" cy="14.6" r=".5"/><circle cx="3.6" cy="16.6" r=".6"/><circle cx="14.6" cy="9.6" r=".6"/></g><circle cx="10.6" cy="13.6" r=".7" fill="#dfe6ee"/><use href="#yFront"/></svg><div class="t " id="t32" style="top:61px;letter-spacing:-0.518px;">Season 01</div></div>
<div class="card qa" style="left:860px;top:343px"><svg style="left:105.9px;top:17.8px" width="34.8" height="28.1" viewBox="0 0 35 29" preserveAspectRatio="none"><use href="#yBack"/><rect x="0.4" y="5.5" width="32.5" height="12.2" fill="#fde500"/><rect x="16.3" y="5.5" width="1.7" height="10" fill="#1a1400"/><rect x="17.3" y="6.5" width=".7" height="9" fill="#3a9ad0"/><rect x="32" y="5.5" width="1" height="10.2" fill="#fff6a8"/><use href="#yFront"/></svg><div class="t " id="t33" style="top:61px;letter-spacing:0.000px;">1080p</div></div>
<div class="card qa" style="left:1116px;top:343px"><svg style="left:105.3px;top:17.8px" width="35.3" height="28.1" viewBox="0 0 36 29" preserveAspectRatio="none"><use href="#iFGlobal"/></svg><div class="t " id="t34" style="top:61px;letter-spacing:0.252px;">Global</div></div>
<!--DRIVES-->
<div class="t sec" id="t35" style="left:346.74px;top:467.8px;letter-spacing:-0.396px;">Drives</div>
<svg style="left:1804px;top:471px" width="18" height="6" viewBox="0 0 18 6"><circle cx="3.2" cy="3" r="1.4" fill="#fff"/><circle cx="9" cy="3" r="1.4" fill="#fff"/><circle cx="14.8" cy="3" r="1.4" fill="#fff"/></svg>
<svg style="left:1860.6px;top:469.8px" width="12" height="8" viewBox="0 0 12 8"><path d="M2.2 6.6 L6.7 2 L11.2 6.6" stroke="#fff" stroke-width="1.4" fill="none" stroke-linecap="round" stroke-linejoin="round"/></svg>
<div class="card dr" style="left:347px;top:504px"><svg style="left:11px;top:25px" width="40" height="40" viewBox="0 0 40 40"><use href="#dBase"/><use href="#dWin"/><use href="#dLock"/></svg><div class="t n" id="t36" style="left:60.70px;top:16.4px;letter-spacing:0.129px;">Local Disk (C:)</div><div class="bar"></div><div class="fill" style="width:110px"></div><div class="t s" id="t37" style="left:60.40px;top:61.6px;letter-spacing:-0.798px;">926.4 GB free of 1.82 TB</div></div>
<div class="card dr" style="left:657px;top:504px"><svg style="left:11px;top:25px" width="40" height="40" viewBox="0 0 40 40"><use href="#dBase"/></svg><div class="t n" id="t38" style="left:61.60px;top:16.4px;letter-spacing:0.077px;">2012 Black (D:)</div><div class="bar"></div><div class="t s" id="t39" style="left:60.40px;top:61.6px;letter-spacing:-0.777px;">2.73 TB free of 2.73 TB</div></div>
<div class="card dr" style="left:967px;top:504px"><svg style="left:11px;top:25px" width="40" height="40" viewBox="0 0 40 40"><use href="#dBase"/></svg><div class="t n" id="t40" style="left:61.42px;top:16.4px;letter-spacing:-0.077px;">2018 Black (E:)</div><div class="bar"></div><div class="t s" id="t41" style="left:61.12px;top:61.6px;letter-spacing:-0.785px;">5.45 TB free of 5.46 TB</div></div>
<div class="card dr" style="left:1277px;top:504px"><svg style="left:11px;top:25px" width="40" height="40" viewBox="0 0 40 40"><use href="#dBase"/><use href="#dLock"/></svg><div class="t n" id="t42" style="left:60.34px;top:16.4px;letter-spacing:0.180px;">Elements (F:)</div><div class="bar"></div><div class="fill" style="width:105px"></div><div class="t s" id="t43" style="left:60.94px;top:61.6px;letter-spacing:-0.797px;">4.73 TB free of 9.1 TB</div></div>
<div class="card dr" style="left:347px;top:604px"><svg style="left:11px;top:25px" width="40" height="40" viewBox="0 0 40 40"><use href="#dBase"/><use href="#dLock"/></svg><div class="t n" id="t44" style="left:60.70px;top:16.4px;letter-spacing:0.138px;">External_12tb (G:)</div><div class="bar"></div><div class="fill" style="width:45px"></div><div class="t s" id="t45" style="left:60.40px;top:61.6px;letter-spacing:-0.759px;">8.68 TB free of 10.91 TB</div></div>
<div class="card dr" style="left:657px;top:604px"><svg style="left:11px;top:25px" width="40" height="40" viewBox="0 0 40 40"><use href="#dNet"/><use href="#dBase"/></svg><div class="t n" id="t46" style="left:60.70px;top:16.4px;letter-spacing:0.620px;">mints (Y:)</div><div class="bar"></div><div class="fill" style="width:110px"></div><div class="t s" id="t47" style="left:60.40px;top:61.6px;letter-spacing:-0.798px;">926.4 GB free of 1.82 TB</div></div>
<div class="card dr" style="left:967px;top:604px"><svg style="left:11px;top:25px" width="40" height="40" viewBox="0 0 40 40"><use href="#dNet"/><use href="#dBase"/></svg><div class="t n" id="t48" style="left:60.52px;top:16.4px;letter-spacing:0.800px;">mints (Z:)</div><div class="bar"></div><div class="fill" style="width:110px"></div><div class="t s" id="t49" style="left:61.12px;top:61.6px;letter-spacing:-0.837px;">926.4 GB free of 1.82 TB</div></div>
<!--RECENT-->
<div class="t sec" id="t50" style="left:346.74px;top:728.8px;letter-spacing:-0.295px;">Recent files</div>
<svg style="left:1860.6px;top:730.8px" width="12" height="8" viewBox="0 0 12 8"><path d="M2.2 6.6 L6.7 2 L11.2 6.6" stroke="#fff" stroke-width="1.4" fill="none" stroke-linecap="round" stroke-linejoin="round"/></svg>
<div class="abs" style="left:348px;top:766px;width:1528px;height:63.5px;background:#43351c;border-radius:4px"></div>
<svg style="left:367px;top:786px" width="21" height="21" viewBox="0 0 21 21"><circle cx="10.5" cy="10.4" r="9.6" fill="#fce100"/><rect x="9.85" y="6.6" width="1.4" height="4.8" rx=".5" fill="#2e2508"/><circle cx="10.55" cy="14" r=".9" fill="#2e2508"/></svg>
<div class="t " id="t51" style="left:405.34px;top:789.6px;letter-spacing:-0.131px;font-size:17.5px">Recently used files is currently disabled in Windows File Explorer.</div>
<div class="abs" style="left:320px;top:960px;width:1584px;height:1px;background:#3a3936"></div>
<svg style="left:722.2px;top:320.2px" width="16" height="23" viewBox="-2 -2 16 23"><path d="M0 0 L0 16.6 L3.8 13 L6.7 18.8 L9.2 17.6 L6.4 12 L11.6 12Z" fill="#fff" stroke="#05050f" stroke-width="1.1" stroke-linejoin="round"/></svg>
<div id="frame"></div>
</div>
</body>
</html>
